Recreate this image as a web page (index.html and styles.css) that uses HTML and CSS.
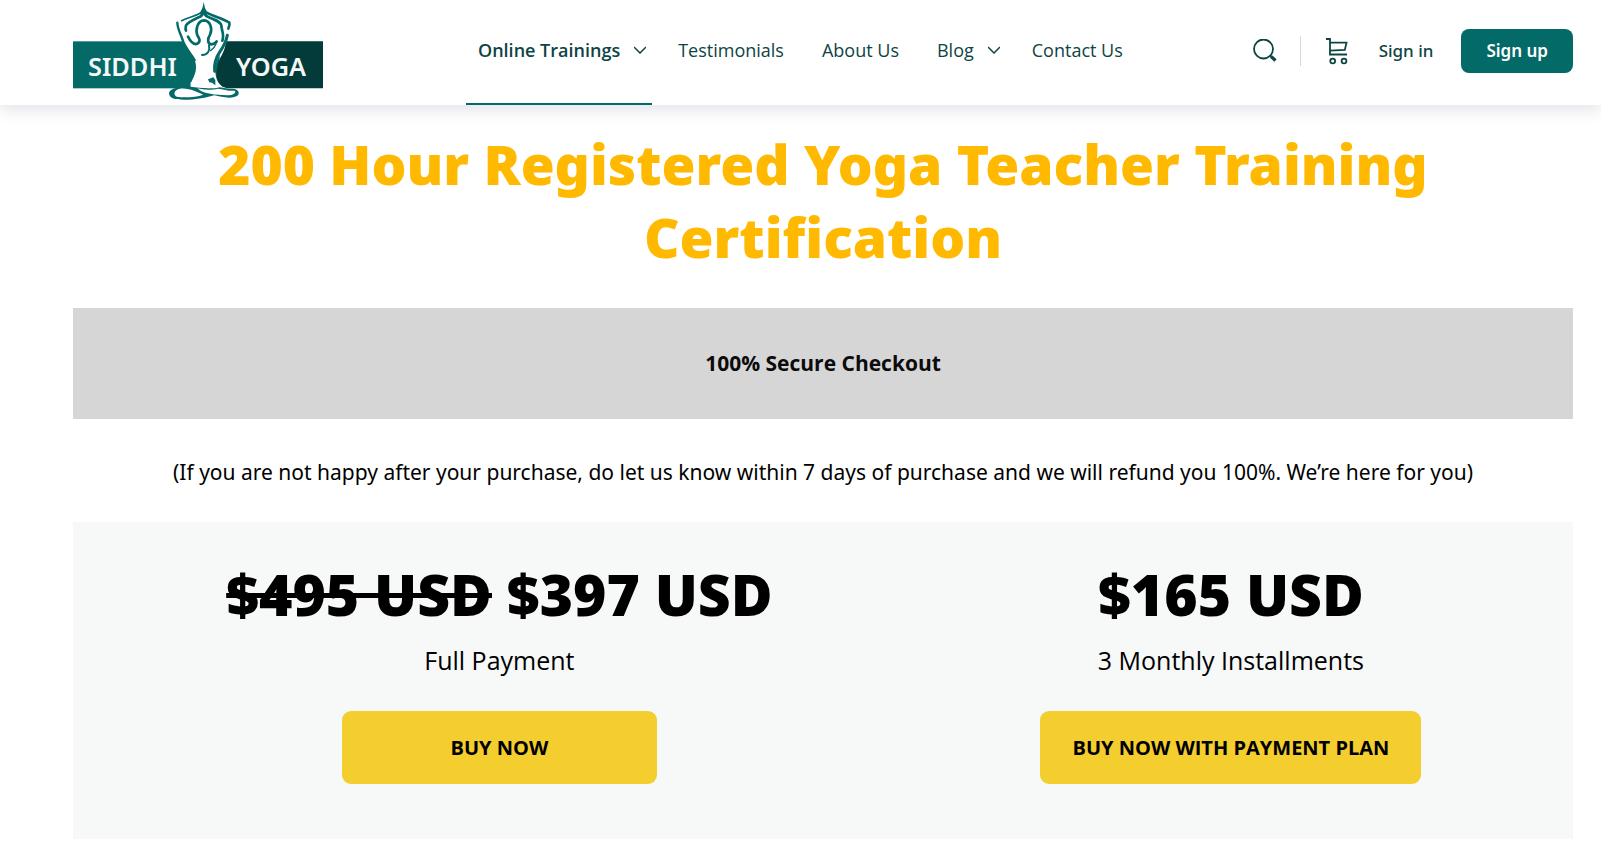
FILE: index.html
```html
<!DOCTYPE html>
<html lang="en">
<head>
  <meta charset="UTF-8" />
  <meta name="viewport" content="width=device-width, initial-scale=1.0"/>
  <title>200 Hour Registered Yoga Teacher Training - Siddhi Yoga</title>
  <link rel="stylesheet" href="styles.css">
</head>

<body>
  <header class="site-header">
    <a class="logo" href="#" aria-label="Siddhi Yoga">
      <svg viewBox="39 0 750 300" width="250" height="100">
        <!-- banner -->
        <rect x="39" y="124" width="440" height="141" fill="#046a68"/>
        <path d="M498 124H789V265H497C478 258 468 240 470 215C472 190 480 175 488 160C494 148 497 136 498 124Z" fill="#033b3a"/>
        <text class="logo-text" x="84" y="227">SIDDHI</text>
        <text class="logo-text" x="528" y="227">YOGA</text>

        <!-- body -->
        <path d="M350 66L430 40L510 68L506 92C500 112 494 136 486 152C472 176 464 190 466 214C467 234 472 248 486 260L520 270C540 282 520 292 490 292L370 292C336 290 334 270 364 264L392 262C390 246 402 236 407 214C409 200 408 190 404 180C390 156 362 124 350 66Z" fill="#fff"/>
        <path d="M431 5C434 20 435 28 444 38L438 50L431 46L424 50L419 38C427 28 429 20 431 5Z" fill="#046a68"/>
        <g fill="none" stroke="#046a68" stroke-width="8" stroke-linecap="round" stroke-linejoin="round">
          <path d="M422 39C402 50 386 52 365 62" stroke-width="5"/>
          <path d="M440 38C462 50 486 54 508 68C510 74 508 80 505 86"/>
          <path d="M424 48C404 58 384 66 378 76C376 84 376 88 378 92"/>
          <path d="M438 48C458 56 482 64 484 76C484 90 494 104 487 122"/>
          <path d="M352 68C352 86 364 106 370 126C380 148 394 164 404 180" stroke-width="7"/>
          <path d="M502 106C498 128 488 144 478 158C466 176 462 196 464 214" stroke-width="9"/>
          <path d="M384 110C390 122 398 134 410 132C424 126 418 114 412 106C406 90 412 62 432 61C452 62 458 88 450 104C442 116 442 132 454 133C464 132 468 128 470 124"/>
          <path d="M447 136C450 150 446 164 426 165" stroke-width="6"/>
          <path d="M468 132C464 142 458 148 452 152" stroke-width="4"/>
        </g>
        <path d="M444 238L460 232L466 240L466 256L456 248L448 247Z" fill="#046a68"/>

        <!-- crossed legs -->
        <path d="M390 260C352 260 327 266 327 280C328 298 350 300 384 299C420 298 440 292 462 286C486 292 520 298 534 286C540 276 534 268 518 266C508 268 494 264 480 262C440 268 420 262 390 260Z" fill="#046a68"/>
        <path d="M350 270C364 262 384 266 402 272C418 278 426 282 430 284C408 292 372 294 350 290C340 284 342 276 350 270Z" fill="#fff"/>
        <path d="M412 265C430 270 456 270 474 266C490 268 508 274 524 272C530 278 520 286 500 286C470 284 430 284 412 265Z" fill="#fff"/>
        <path d="M392 246C410 256 440 250 462 258L474 263C448 268 418 262 392 256Z" fill="#fff"/>
      </svg>
    </a>

    <nav class="main-nav">
      <a class="nav-link active" href="#">Online Trainings
        <svg class="chevron" viewBox="0 0 12 8" width="12" height="8"><path d="M0 1l6 6 6-6"/></svg>
      </a>
      <a class="nav-link" href="#">Testimonials</a>
      <a class="nav-link" href="#">About Us</a>
      <a class="nav-link" href="#">Blog
        <svg class="chevron" viewBox="0 0 12 8" width="12" height="8"><path d="M0 1l6 6 6-6"/></svg>
      </a>
      <a class="nav-link" href="#">Contact Us</a>
    </nav>

    <div class="header-actions">
      <button class="icon-btn" type="button" aria-label="Search">
        <svg viewBox="0 0 24 24" width="24" height="24">
          <circle cx="10.5" cy="10" r="9.5"/>
          <path d="M17 16.500l1.500 1"/>
          <path d="M18 17.500l4.500 4" stroke-width="3.200"/>
        </svg>
      </button>
      <span class="divider"></span>
      <a class="icon-btn" href="#" aria-label="Cart">
        <svg viewBox="0 0 22 28" width="22" height="28">
          <path d="M0 2h4v15.500h17M4 5.700h16.500l-1.700 7.200L4 13.700"/>
          <circle cx="6.700" cy="24" r="2.400"/>
          <circle cx="18" cy="24" r="2.400"/>
        </svg>
      </a>
      <a class="sign-in" href="#">Sign in</a>
      <a class="sign-up" href="#">Sign up</a>
    </div>
  </header>

  <main class="content">
    <h1>200 Hour Registered Yoga Teacher Training Certification</h1>

    <div class="secure-box">100% Secure Checkout</div>

    <p class="refund">(If you are not happy after your purchase, do let us know within 7 days of purchase and we will refund you 100%. We’re here for you)</p>

    <section class="pricing">
      <div class="plan">
        <h2><s>$495 USD</s> $397 USD</h2>
        <p>Full Payment</p>
        <button class="buy-btn" type="button">BUY NOW</button>
      </div>
      <div class="plan">
        <h2>$165 USD</h2>
        <p>3 Monthly Installments</p>
        <button class="buy-btn" type="button">BUY NOW WITH PAYMENT PLAN</button>
      </div>
    </section>
  </main>
</body>
</html>
```
FILE: styles.css
```css
* {
  box-sizing: border-box;
}

body {
  margin: 0;
  font-family: "Segoe UI", "Open Sans", sans-serif;
  background: #fff;
  color: #000;
}

a {
  text-decoration: none;
  color: inherit;
}

h1,
h2,
.logo-text,
.header-actions,
.refund {
  font-family: "Segoe UI", "Noto Sans", sans-serif;
}

.site-header {
  display: flex;
  align-items: center;
  height: 105px;
  padding: 0 28px 0 73px;
  background: #fff;
  color: #0d4444;
  box-shadow: 0 5px 14px 0 rgba(65, 71, 108, 0.15);
}

.logo {
  padding-bottom: 5px;
}

.logo svg {
  display: block;
}

.logo-text {
  font-size: 76px;
  font-weight: 600;
  fill: #f4f8f8;
}

.main-nav {
  display: flex;
  align-self: stretch;
  gap: 14px;
  margin-left: 143px;
}

.nav-link {
  display: flex;
  align-items: center;
  gap: 14px;
  padding: 0 12px 4px;
  font-size: 18px;
  white-space: nowrap;
  border-bottom: 2px solid transparent;
}

.nav-link:has(.chevron) {
  padding-right: 6px;
}

.nav-link.active {
  font-weight: 600;
  border-bottom-color: #046a68;
}

.chevron {
  fill: none;
  stroke: #0d4444;
  stroke-width: 1.5;
}

.header-actions {
  display: flex;
  align-items: center;
  margin-left: auto;
  padding-bottom: 4px;
}

.icon-btn {
  display: flex;
  padding: 0;
  border: none;
  background: none;
  color: inherit;
  cursor: pointer;
}

.icon-btn svg {
  fill: none;
  stroke: #0d4444;
  stroke-width: 1.8;
}

.divider {
  width: 1px;
  height: 30px;
  margin: 0 25px 0 23px;
  background: #ccdcdb;
}

.sign-in {
  margin: 0 28px 0 31px;
  font-size: 17px;
  font-weight: 500;
}

.sign-up {
  padding: 0 25px;
  border-radius: 8px;
  background: #046a68;
  color: #fff;
  font-size: 17px;
  font-weight: 600;
  line-height: 44px;
}

.content {
  padding: 22px 28px 3px 73px;
  text-align: center;
}

h1,
h2 {
  font-weight: 900;
  line-height: 73px;
}

h1 {
  margin: 0 0 35px;
  padding: 0 100px;
  color: #ffb900;
  font-size: 55px;
}

.secure-box {
  padding: 38px 20px;
  background: #d6d6d6;
  color: #0b0b0b;
  font-size: 21px;
  font-weight: 700;
  line-height: 35px;
}

.refund {
  margin: 36px 0 32px;
  font-size: 21px;
  line-height: 35px;
}

.pricing {
  display: grid;
  grid-template-columns: 5fr 4fr;
  padding: 36px 17px 55px 20px;
  background: #f7f9f8;
}

.plan h2 {
  margin: 0;
  font-size: 57px;
}

.plan p {
  margin: 10px 0 32px;
  font-size: 25px;
  line-height: 38px;
}

.buy-btn {
  min-width: 315px;
  padding: 0 32px;
  border: none;
  border-radius: 9px;
  background: #f4cd2f;
  color: #000;
  font-family: inherit;
  font-size: 20px;
  font-weight: 700;
  line-height: 73px;
  cursor: pointer;
}
```
